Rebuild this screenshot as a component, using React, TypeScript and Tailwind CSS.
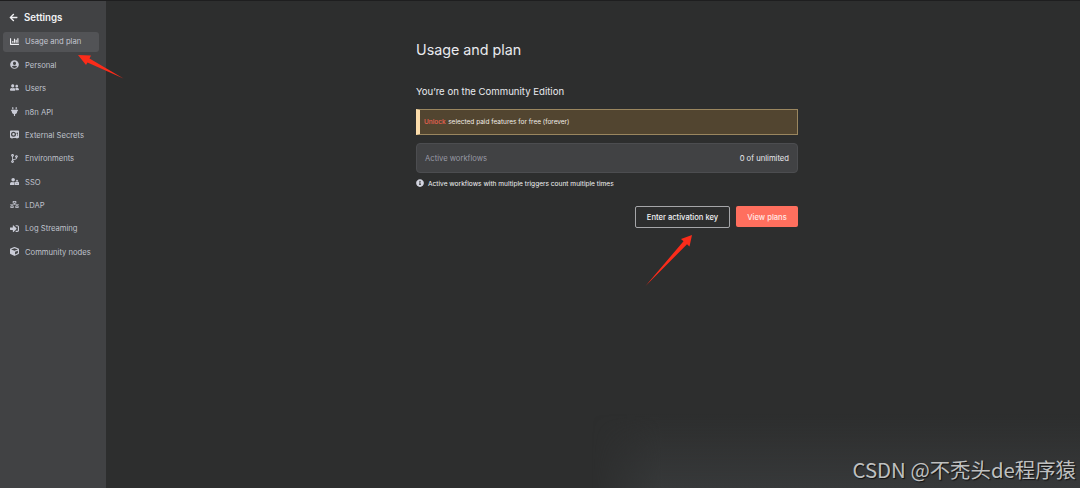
import React from "react";
import {
  FaArrowLeft,
  FaChartBar,
  FaCodeBranch,
  FaCube,
  FaInfoCircle,
  FaNetworkWired,
  FaPlug,
  FaSignInAlt,
  FaUserCircle,
  FaUserFriends,
  FaUserLock,
} from "react-icons/fa";
import { FaVault } from "react-icons/fa6";
import type { IconType } from "react-icons";

type Item = { label: string; icon: IconType; active?: boolean };

const items: Item[] = [
  { label: "Usage and plan", icon: FaChartBar, active: true },
  { label: "Personal", icon: FaUserCircle },
  { label: "Users", icon: FaUserFriends },
  { label: "n8n API", icon: FaPlug },
  { label: "External Secrets", icon: FaVault },
  { label: "Environments", icon: FaCodeBranch },
  { label: "SSO", icon: FaUserLock },
  { label: "LDAP", icon: FaNetworkWired },
  { label: "Log Streaming", icon: FaSignInAlt },
  { label: "Community nodes", icon: FaCube },
];

function Sidebar() {
  return (
    <aside className="w-[106px] shrink-0 bg-[#414244] pt-[8px]">
      <div className="flex h-4 items-center pl-[9px] text-[#f2f2f4]">
        <FaArrowLeft className="size-[9px]" />
        <h2 className="ml-1.5 pt-px text-[9.7px] leading-4 font-semibold">Settings</h2>
      </div>
      <nav className="mt-[6.7px] flex flex-col gap-[3.4px] pr-[7px] pl-[3px]">
        {items.map(({ label, icon: Icon, active }) => (
          <a
            key={label}
            className={
              active
                ? "flex h-5 items-center rounded-[3px] bg-[#525356] pl-[6px] text-[#c3c5d0]"
                : "flex h-5 items-center rounded-[3px] pl-[6px] text-[#bfc1cb]"
            }
          >
            <span className={active ? "flex w-[11px] justify-center pb-px text-[#f0f0f4]" : "flex w-[11px] justify-center pb-px text-[#c9cbd6]"}>
              <Icon className="size-[9px]" />
            </span>
            <span className="ml-[5px] pt-px text-[7.65px] leading-none whitespace-nowrap">{label}</span>
          </a>
        ))}
      </nav>
    </aside>
  );
}

export default function App() {
  return (
    <div className="relative flex h-[488px] w-[1080px] overflow-hidden border-t border-[#1e1e1f] bg-[#2d2e2e] font-['Inter',sans-serif]">
      <Sidebar />
      <main className="ml-[310px] w-[382px] pt-[39px]">
        <h1 className="text-[14.3px] leading-5 text-[#e9eaee]">Usage and plan</h1>
        <h2 className="mt-[24px] text-[9.6px] leading-4 text-[#e9eaee]">You’re on the Community Edition</h2>
        <div className="mt-[9px] flex h-[26px] items-center border border-l-4 border-[#9a865f] border-l-[#fbdcab] bg-[#524530] pt-px pl-1 text-[6.5px] text-[#f2efe9]">
          <span className="mr-[2.5px] font-medium text-[#ee6352]">Unlock</span>
          <span>selected paid features for free (forever)</span>
        </div>
        <div className="mt-2 flex h-[30px] items-center justify-between rounded-[4px] border border-[#4c4d50] bg-[#414244] px-2 pt-px text-[7.65px]">
          <span className="text-[#9899a4]">Active workflows</span>
          <span className="text-[#e9eaee]">0 of unlimited</span>
        </div>
        <div className="mt-[6px] flex h-[10px] items-center gap-[4px] text-[6.6px] text-[#f2f2f4]">
          <FaInfoCircle className="mb-[2px] size-[8px] text-[#d3d5e0]" />
          <span className="pt-px">Active workflows with multiple triggers count multiple times</span>
        </div>
        <div className="mt-[17px] flex justify-end gap-[6px] text-[7.6px] font-medium">
          <button className="h-[22px] w-[95px] rounded-[2px] border border-[#a5a6a9] pt-px text-[#f2f2f4]">Enter activation key</button>
          <button className="h-[21px] w-[62px] rounded-[2px] bg-[#ff6f5e] pt-[2px] text-[#ffe9e6]">View plans</button>
        </div>
      </main>
      <svg className="pointer-events-none absolute -top-px left-0 h-[488px] w-[1080px]" viewBox="0 0 1080 488" aria-hidden="true">
        <path d="M78 55L91 55.5L89.5 58.5L123.5 78.5L87.5 62.5L86 65Z" fill="#fb2c1a" />
        <path d="M692 235L689.5 246.5L687 244.3L645.5 286L683.5 241.2L681 239Z" fill="#fb2c1a" />
      </svg>
      <div className="pointer-events-none absolute right-0 bottom-0 h-[74px] w-[488px] bg-linear-to-b from-transparent to-[#37393a] [mask-image:linear-gradient(to_right,transparent,black_70px)]" />
      <div className="absolute right-1 bottom-1 font-['Noto_Sans_CJK_SC',sans-serif] text-[20.4px] leading-[30px] whitespace-nowrap text-[#bfc0c0] [text-shadow:1px_1px_1px_#111]">
        CSDN @不秃头de程序猿
      </div>
    </div>
  );
}
